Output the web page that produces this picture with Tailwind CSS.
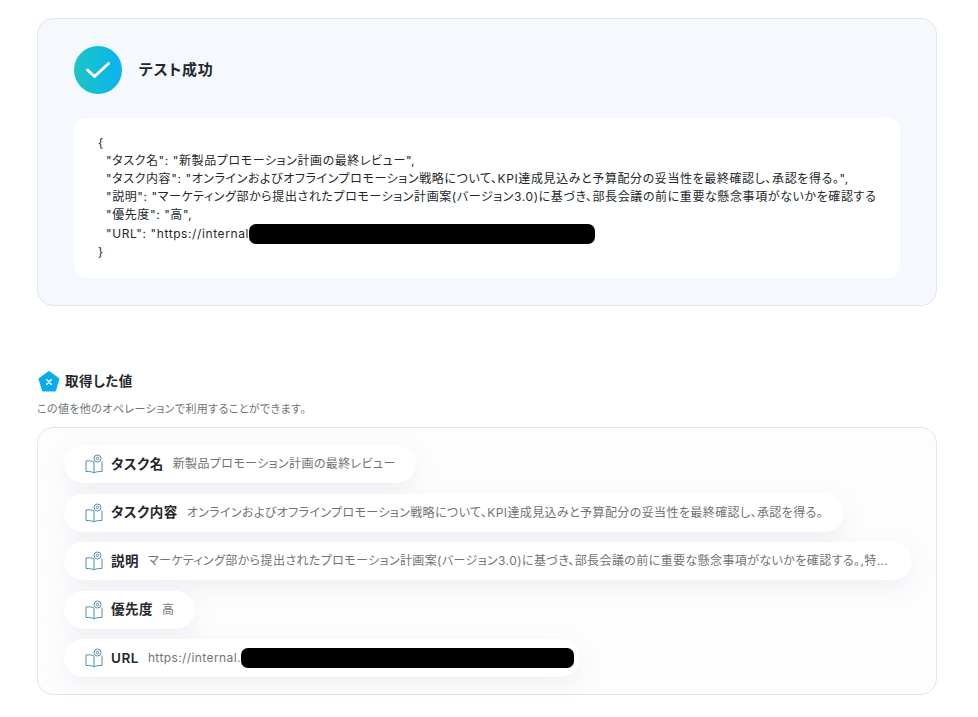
<!doctype html>
<html lang="ja">
  <head>
    <meta charset="UTF-8" />
    <title>テスト成功</title>
    <script src="https://cdn.jsdelivr.net/npm/@tailwindcss/browser@4"></script>
  </head>
  <body class="bg-white font-['Inter','Noto_Sans_CJK_JP',sans-serif] text-[#24282e] overflow-hidden [font-feature-settings:'palt']">
    <div class="w-[978px] h-[717px] pt-[18px] pl-[37px]">
      <!-- test result -->
      <section class="w-[900px] h-[288px] rounded-[16px] border border-[#e3e6ec] bg-[#f5f8fc] pt-[27px] pl-[36px]">
        <div class="flex items-center gap-[17px] h-[48px]">
          <div class="w-[48px] h-[48px] rounded-full bg-gradient-to-r from-[#1fc4c4] to-[#0bb3f0] flex items-center justify-center">
            <svg width="24" height="16" viewBox="0 0 24 16" fill="none"><path d="M1.500 8 L8.500 14.500 L22.500 1.500" stroke="#fff" stroke-width="3" stroke-linecap="round" stroke-linejoin="round"/></svg>
          </div>
          <h2 class="text-[15px] font-semibold tracking-[0.8px]">テスト成功</h2>
        </div>
        <div class="mt-[24px] w-[826px] h-[160px] rounded-[12px] bg-white pt-[15.5px] pl-[24px] text-[12px] leading-[18.2px] tracking-[0.6px] whitespace-pre">{
  "タスク名": "新製品プロモーション計画の最終レビュー",
  "タスク内容": "オンラインおよびオフラインプロモーション戦略について、KPI達成見込みと予算配分の妥当性を最終確認し、承認を得る。",
  "説明": "マーケティング部から提出されたプロモーション計画案(バージョン3.0)に基づき、部長会議の前に重要な懸念事項がないかを確認する
  "優先度": "高",
  "URL": "https://internal<span class="inline-block w-[346px] h-[20px] -my-[2px] rounded-[7px] bg-black align-middle"></span>
}</div>
      </section>

      <!-- values -->
      <div class="mt-[65px] flex items-center gap-[5px] h-[20px]">
        <svg width="22" height="21" viewBox="0 0 22 21" class="ml-[1px]"><path d="M11 1 L20.500 8 L17 19.500 L5 19.500 L1.500 8 Z" fill="#0bade8" stroke="#0bade8" stroke-width="2" stroke-linejoin="round"/><path d="M8.800 8.800 L13.200 13.200 M13.200 8.800 L8.800 13.200" stroke="#fff" stroke-width="1.600" stroke-linecap="round"/></svg>
        <h3 class="text-[13.5px] font-semibold tracking-[0.5px]">取得した値</h3>
      </div>
      <p class="mt-[11px] text-[11px] leading-[14px] tracking-[0.4px] text-[#6f7479]">この値を他のオペレーションで利用することができます。</p>

      <section class="mt-[11px] w-[900px] h-[268px] rounded-[16px] border border-[#e3e6ec] bg-[#fefdfe] pt-[17px] pl-[26px] flex flex-col items-start gap-[10.5px]">
        <div class="h-[38px] w-[352px] flex items-center rounded-full bg-white pl-[21px] shadow-[0_8px_24px_rgba(90,60,120,0.08)]">
          <svg width="18" height="20" viewBox="0 0 18 20" fill="none" stroke="#4d8fa6" stroke-width="1"><path d="M9 8 L9 19 M9 19 C7 17.500 4 17.500 1 17.500 L1 7 C4 6.500 7 7 9 8 M9 19 C11 17.500 14 17.500 17 17.500 L17 7.500"/><circle cx="12.500" cy="4.500" r="3.500"/><circle cx="12.500" cy="4.500" r="1.200"/></svg>
          <span class="ml-[8px] text-[13.5px] font-semibold tracking-[0.5px]">タスク名</span>
          <span class="ml-[9px] text-[12px] tracking-[0.4px] text-[#6f7479]">新製品プロモーション計画の最終レビュー</span>
        </div>
        <div class="h-[38px] w-[780px] flex items-center rounded-full bg-white pl-[21px] shadow-[0_8px_24px_rgba(90,60,120,0.08)]">
          <svg width="18" height="20" viewBox="0 0 18 20" fill="none" stroke="#4d8fa6" stroke-width="1"><path d="M9 8 L9 19 M9 19 C7 17.500 4 17.500 1 17.500 L1 7 C4 6.500 7 7 9 8 M9 19 C11 17.500 14 17.500 17 17.500 L17 7.500"/><circle cx="12.500" cy="4.500" r="3.500"/><circle cx="12.500" cy="4.500" r="1.200"/></svg>
          <span class="ml-[8px] text-[13.5px] font-semibold tracking-[0.5px]">タスク内容</span>
          <span class="ml-[9px] text-[12px] tracking-[0.4px] text-[#6f7479] whitespace-nowrap">オンラインおよびオフラインプロモーション戦略について、KPI達成見込みと予算配分の妥当性を最終確認し、承認を得る。</span>
        </div>
        <div class="h-[38px] w-[848px] flex items-center rounded-full bg-white pl-[21px] shadow-[0_8px_24px_rgba(90,60,120,0.08)]">
          <svg width="18" height="20" viewBox="0 0 18 20" fill="none" stroke="#4d8fa6" stroke-width="1"><path d="M9 8 L9 19 M9 19 C7 17.500 4 17.500 1 17.500 L1 7 C4 6.500 7 7 9 8 M9 19 C11 17.500 14 17.500 17 17.500 L17 7.500"/><circle cx="12.500" cy="4.500" r="3.500"/><circle cx="12.500" cy="4.500" r="1.200"/></svg>
          <span class="ml-[8px] text-[13.5px] font-semibold tracking-[0.5px]">説明</span>
          <span class="ml-[9px] text-[12px] tracking-[0.4px] text-[#6f7479] whitespace-nowrap">マーケティング部から提出されたプロモーション計画案(バージョン3.0)に基づき、部長会議の前に重要な懸念事項がないかを確認する。,特...</span>
        </div>
        <div class="h-[38px] w-[131px] flex items-center rounded-full bg-white pl-[21px] shadow-[0_8px_24px_rgba(90,60,120,0.08)]">
          <svg width="18" height="20" viewBox="0 0 18 20" fill="none" stroke="#4d8fa6" stroke-width="1"><path d="M9 8 L9 19 M9 19 C7 17.500 4 17.500 1 17.500 L1 7 C4 6.500 7 7 9 8 M9 19 C11 17.500 14 17.500 17 17.500 L17 7.500"/><circle cx="12.500" cy="4.500" r="3.500"/><circle cx="12.500" cy="4.500" r="1.200"/></svg>
          <span class="ml-[8px] text-[13.5px] font-semibold tracking-[0.5px]">優先度</span>
          <span class="ml-[9px] text-[12px] tracking-[0.4px] text-[#6f7479]">高</span>
        </div>
        <div class="h-[38px] w-[516px] flex items-center rounded-full bg-white pl-[21px] shadow-[0_8px_24px_rgba(90,60,120,0.08)]">
          <svg width="18" height="20" viewBox="0 0 18 20" fill="none" stroke="#4d8fa6" stroke-width="1"><path d="M9 8 L9 19 M9 19 C7 17.500 4 17.500 1 17.500 L1 7 C4 6.500 7 7 9 8 M9 19 C11 17.500 14 17.500 17 17.500 L17 7.500"/><circle cx="12.500" cy="4.500" r="3.500"/><circle cx="12.500" cy="4.500" r="1.200"/></svg>
          <span class="ml-[8px] text-[13.5px] font-semibold tracking-[0.5px]">URL</span>
          <span class="ml-[9px] text-[12px] tracking-[0.4px] text-[#6f7479]">https://internal.</span>
          <span class="w-[333px] h-[20px] rounded-[7px] bg-black"></span>
        </div>
      </section>
    </div>
  </body>
</html>
